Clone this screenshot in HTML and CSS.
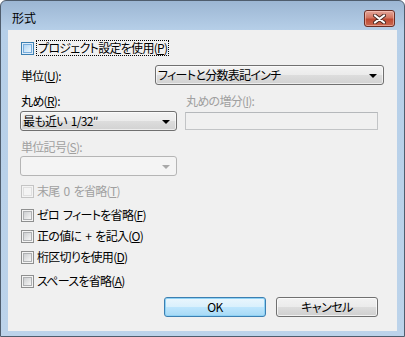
FILE: index.html
```html
<!DOCTYPE html>
<html lang="ja">
<head>
    <meta charset="UTF-8">
    <title>形式</title>
    <link rel="stylesheet" href="styles.css">
</head>
<body>
    <div class="window">
        <div class="titlebar">
            <span class="title">形式</span>
            <span class="close-btn">
                <svg width="13" height="10" viewBox="0 0 13 10">
                    <path d="M2 1.5 L11 8.5 M11 1.5 L2 8.5" stroke="#4a2a24" stroke-width="4" stroke-linecap="round"/>
                    <path d="M2 1.5 L11 8.5 M11 1.5 L2 8.5" stroke="#ffffff" stroke-width="2.2" stroke-linecap="round"/>
                </svg>
            </span>
        </div>
        <div class="client">
            <div class="check-row project-row">
                <span class="box box-hot"></span>
                <span class="focus-text">プロジェクト設定を使用(<u>P</u>)</span>
            </div>

            <div class="unit-row">
                <span>単位(<u>U</u>):</span>
                <div class="combo">フィートと分数表記インチ<span class="arrow"></span></div>
            </div>

            <div class="round-grid">
                <span class="lbl">丸め(<u>R</u>):</span>
                <span class="lbl disabled">丸めの増分(<u>I</u>):</span>
                <div class="combo">最も近い 1/32″<span class="arrow"></span></div>
                <div class="edit"></div>
            </div>

            <div class="lbl disabled symbol-label">単位記号(<u>S</u>):</div>
            <div class="combo combo-disabled symbol-combo"><span class="arrow"></span></div>

            <div class="checks">
                <div class="check-row disabled"><span class="box box-disabled"></span>末尾 0 を省略(<u>T</u>)</div>
                <div class="check-row extra-top"><span class="box"></span>ゼロ フィートを省略(<u>F</u>)</div>
                <div class="check-row"><span class="box"></span>正の値に + を記入(<u>O</u>)</div>
                <div class="check-row"><span class="box"></span>桁区切りを使用(<u>D</u>)</div>
                <div class="check-row extra-top"><span class="box"></span>スペースを省略(<u>A</u>)</div>
            </div>

            <div class="buttons">
                <button class="btn btn-default">OK</button>
                <button class="btn">キャンセル</button>
            </div>
        </div>
    </div>
</body>
</html>
```

FILE: styles.css
```css
body {
    margin: 0;
    font-family: "Noto Sans CJK JP", "Noto Sans", sans-serif;
    font-size: 12px;
    font-feature-settings: "palt";
    letter-spacing: -0.7px;
    word-spacing: 2px;
    color: #000;
}
u {
    text-decoration-thickness: 1px;
    text-underline-offset: 1px;
}
.window {
    width: 405px;
    height: 337px;
    box-sizing: border-box;
    border: 1px solid #4f5d6d;
    border-radius: 6px 6px 0 0;
    background: linear-gradient(#9cb6d3, #b6cfe8 29px, #bcd3ea);
    display: flex;
    flex-direction: column;
}
.titlebar {
    height: 29px;
    box-sizing: border-box;
    padding: 9px 9px 0 11px;
    display: flex;
    align-items: flex-start;
}
.title {
    font-size: 12px;
    line-height: 16px;
    letter-spacing: 0;
    font-feature-settings: normal;
}
.close-btn {
    margin-left: auto;
    width: 31px;
    height: 17px;
    box-sizing: border-box;
    border: 1px solid #6b2e25;
    border-radius: 3px;
    background: linear-gradient(#e4a79b, #d27561 45%, #bf4a33 55%, #c96a52);
    box-shadow: inset 0 0 0 1px rgba(255, 210, 200, 0.5);
    display: flex;
    align-items: center;
    justify-content: center;
}
.client {
    margin: 0 7px;
    height: 301px;
    background: #f0f0f0;
    padding-left: 13px;
    box-sizing: border-box;
    display: flex;
    flex-direction: column;
}
.disabled {
    color: #a0a0a0;
}
.check-row {
    height: 16px;
    display: flex;
    align-items: center;
    line-height: 16px;
    white-space: pre;
}
.project-row {
    margin-top: 10px;
}
.box {
    width: 13px;
    height: 13px;
    box-sizing: border-box;
    border: 1px solid #8e8f8f;
    background: #f4f4f4;
    position: relative;
    margin-right: 3px;
    flex: none;
}
.box::after {
    content: "";
    position: absolute;
    left: 1px;
    top: 1px;
    width: 9px;
    height: 9px;
    box-sizing: border-box;
    border: 1px solid #aeb0b2;
    background: linear-gradient(135deg, #cdcfd1, #f6f6f6);
}
.box-hot {
    border-color: #3c7fb1;
    background: #deedf9;
}
.box-hot::after {
    border-color: #79aede;
    background: linear-gradient(135deg, #b1d5f2, #eaf5fd);
}
.box-disabled {
    border-color: #c4c4c4;
}
.box-disabled::after {
    border-color: #e0e0e0;
    background: #f4f4f4;
}
.focus-text {
    height: 16px;
    box-sizing: border-box;
    border: 1px dotted #000;
    padding: 0 1px;
    margin-left: -1px;
    line-height: 14px;
}
.unit-row {
    margin-top: 9px;
    display: grid;
    grid-template-columns: 134px 229px;
    align-items: center;
}
.combo {
    height: 20px;
    box-sizing: border-box;
    border: 1px solid #707070;
    border-radius: 3px;
    background: linear-gradient(#f3f3f3, #ebebeb 50%, #dddddd 50%, #d2d2d2);
    box-shadow: inset 0 0 0 1px rgba(255, 255, 255, 0.6);
    padding-left: 2px;
    line-height: 18px;
    position: relative;
    white-space: pre;
}
.arrow {
    position: absolute;
    right: 6px;
    top: 8px;
    width: 0;
    height: 0;
    border-left: 4px solid transparent;
    border-right: 4px solid transparent;
    border-top: 4px solid #000;
}
.round-grid {
    margin-top: 9px;
    margin-left: -1px;
    display: grid;
    grid-template-columns: 157px 193px;
    grid-template-rows: 14px 20px;
    column-gap: 8px;
    row-gap: 3px;
    align-items: center;
}
.lbl {
    line-height: 14px;
    padding-left: 1px;
}
.edit {
    height: 18px;
    box-sizing: border-box;
    border: 1px solid #c2c4c6;
    border-top-color: #b5b8bb;
    background: #f0f0f0;
}
.symbol-label {
    margin-top: 9px;
    margin-left: -1px;
}
.symbol-combo {
    width: 157px;
    margin-top: 2px;
    margin-left: -1px;
}
.combo-disabled {
    border-color: #b5b5b5;
    background: #f4f4f4;
    box-shadow: none;
}
.combo-disabled .arrow {
    border-top-color: #a8a8a8;
}
.checks {
    margin-top: 7px;
    display: flex;
    flex-direction: column;
    gap: 5px;
}
.checks .extra-top {
    margin-top: 3px;
}
.buttons {
    margin-top: auto;
    padding: 0 19px 14px 0;
    display: flex;
    justify-content: flex-end;
    gap: 10px;
}
.btn {
    width: 102px;
    height: 20px;
    box-sizing: border-box;
    border: 1px solid #707070;
    border-radius: 3px;
    background: linear-gradient(#f2f2f2, #ebebeb 50%, #dddddd 50%, #cfcfcf);
    box-shadow: inset 0 0 0 1px rgba(255, 255, 255, 0.7);
    font-family: inherit;
    font-size: 12px;
    font-feature-settings: "palt";
    letter-spacing: -0.5px;
    padding: 0;
    line-height: 18px;
    color: #000;
}
.btn-default {
    border-color: #3c7fb1;
    background: linear-gradient(#eaf6fd, #d9f0fc 50%, #bee6fd 50%, #a7d9f5);
    box-shadow: inset 0 0 0 1px #8fd2f5;
}
```
